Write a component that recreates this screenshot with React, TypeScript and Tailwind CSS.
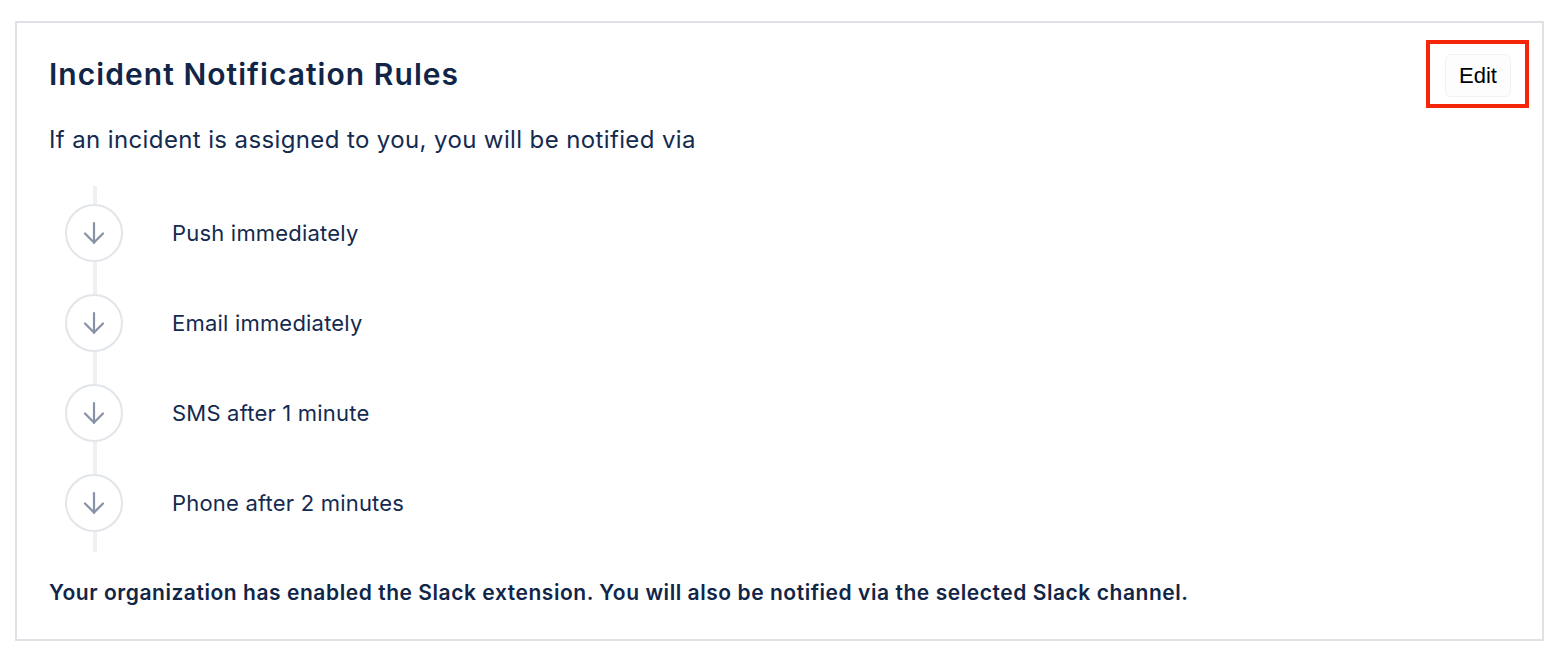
import React from "react";

const items = [
  "Push immediately",
  "Email immediately",
  "SMS after 1 minute",
  "Phone after 2 minutes",
];

function ArrowDown() {
  return (
    <svg width="26" height="26" viewBox="0 0 26 26" fill="none" stroke="#8792a6" strokeWidth="2.2" strokeLinecap="round" strokeLinejoin="round">
      <path d="M13 3v20" />
      <path d="M4 13.5l9 9 9-9" />
    </svg>
  );
}

export default function App() {
  return (
    <div className="w-[1563px] h-[659px] bg-white pt-[21px] pl-[15px]" style={{ fontFamily: "Inter, 'Noto Sans', sans-serif" }}>
      <div className="w-[1529px] h-[620px] border-2 border-[#e0e1e6]">
        <div className="flex items-start justify-between pl-[32px] pr-[13px] pt-[17px]">
          <h1 className="text-[30px] font-semibold text-[#112548] leading-[36px] mt-[16px] tracking-[1.05px]">Incident Notification Rules</h1>
          <div className="border-4 border-[#f5250a] pt-[10px] pb-[7px] pl-[15px] pr-[14px]">
            <button className="h-[43px] w-[66px] rounded-md border border-[#f1f2f4] bg-[#fdfdfd] text-[22px] text-black leading-none" style={{ fontFamily: "'Liberation Sans', Arial, sans-serif" }}>Edit</button>
          </div>
        </div>
        <p className="pl-[32px] mt-[17px] text-[24px] leading-[30px] text-[#142a4f] tracking-[0.38px]">If an incident is assigned to you, you will be notified via</p>
        <div className="relative ml-[48px] mt-[31px] pt-[18px] pb-[20px]">
          <div className="absolute left-[30px] top-0 bottom-0 w-[4px] -translate-x-1/2 bg-[#eef0f3]" />
          <div className="relative flex flex-col gap-[32px]">
            {items.map((t) => (
              <div key={t} className="flex items-center">
                <div className="w-[58px] h-[58px] rounded-full border-2 border-[#e2e5ea] bg-white flex items-center justify-center">
                  <ArrowDown />
                </div>
                <span className="ml-[49px] text-[22px] text-[#142a4f] tracking-[0.2px]">{t}</span>
              </div>
            ))}
          </div>
        </div>
        <p className="pl-[32px] mt-[28px] text-[21px] font-semibold text-[#112548] leading-[26px] tracking-[0.55px]">Your organization has enabled the Slack extension. You will also be notified via the selected Slack channel.</p>
      </div>
    </div>
  );
}
